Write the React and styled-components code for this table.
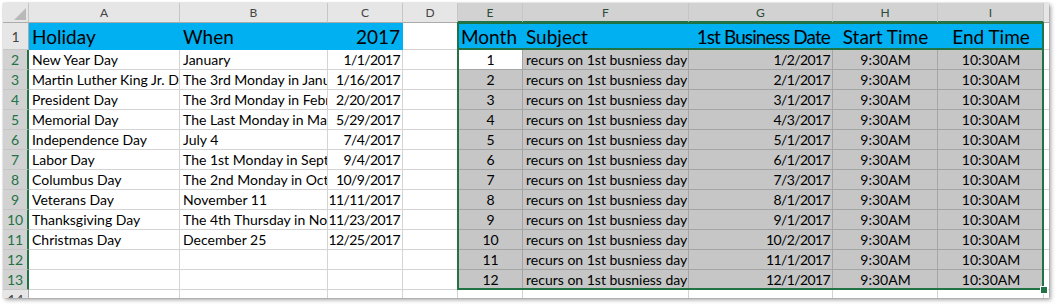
import React from 'react';
import styled, { createGlobalStyle, css } from 'styled-components';

const GlobalStyle = createGlobalStyle`
  html, body {
    margin: 0;
    padding: 0;
    background: #ffffff;
  }
  body {
    font-family: Lato, "Liberation Sans", sans-serif;
  }
`;

const GREEN = '#217346';
const BLUE = '#00b0f0';
const GRID = '#d4d4d4';
const SEL_FILL = '#c6c6c6';
const SEL_GRID = '#a5a5a5';

const columns = [
  { key: 'A', width: 151 },
  { key: 'B', width: 148 },
  { key: 'C', width: 75 },
  { key: 'D', width: 55 },
  { key: 'E', width: 65, selected: true },
  { key: 'F', width: 166, selected: true },
  { key: 'G', width: 144, selected: true },
  { key: 'H', width: 105, selected: true },
  { key: 'I', width: 106, selected: true },
  { key: 'J', width: 6 },
];

const holidays = [
  ['New Year Day', 'January', '1/1/2017'],
  ['Martin Luther King Jr. Day', 'The 3rd Monday in January', '1/16/2017'],
  ['President Day', 'The 3rd Monday in February', '2/20/2017'],
  ['Memorial Day', 'The Last Monday in May', '5/29/2017'],
  ['Independence Day', 'July 4', '7/4/2017'],
  ['Labor Day', 'The 1st Monday in September', '9/4/2017'],
  ['Columbus Day', 'The 2nd Monday in October', '10/9/2017'],
  ['Veterans Day', 'November 11', '11/11/2017'],
  ['Thanksgiving Day', 'The 4th Thursday in November', '11/23/2017'],
  ['Christmas Day', 'December 25', '12/25/2017'],
];

const firstDays = [
  '1/2/2017', '2/1/2017', '3/1/2017', '4/3/2017', '5/1/2017', '6/1/2017',
  '7/3/2017', '8/1/2017', '9/1/2017', '10/2/2017', '11/1/2017', '12/1/2017',
];

const headerRow = [
  { text: 'Holiday', align: 'left' },
  { text: 'When', align: 'left' },
  { text: '2017', align: 'right' },
  null,
  { text: 'Month', align: 'left' },
  { text: 'Subject', align: 'left' },
  { text: '1st Business Date', align: 'right', tight: true },
  { text: 'Start Time', align: 'center' },
  { text: 'End Time', align: 'center' },
  null,
];

const buildRow = (i) => {
  const h = holidays[i] || [];
  const month = i + 1;
  return [
    { text: h[0], align: 'left' },
    { text: h[1], align: 'left' },
    { text: h[2], align: 'right', num: true },
    {},
    { text: String(month), align: 'center', sel: i > 0, active: i === 0 },
    { text: 'recurs on 1st busniess day', align: 'left', sel: true },
    { text: firstDays[i], align: 'right', sel: true, num: true },
    { text: '9:30AM', align: 'center', sel: true },
    { text: '10:30AM', align: 'center', sel: true },
    {},
  ];
};

const App = () => {
  const rows = Array.from({ length: 12 }, (_, i) => buildRow(i));

  return (
    <Page>
      <GlobalStyle />
      <Sheet>
        <Grid>
          <Corner>
            <svg width="12" height="12" viewBox="0 0 12 12">
              <polygon points="12,0 12,12 0,12" fill="#b9b9b9" />
            </svg>
          </Corner>
          {columns.map((c) => (
            <ColHead key={c.key} $selected={c.selected}>
              {c.key === 'J' ? '' : c.key}
            </ColHead>
          ))}

          <RowHead>1</RowHead>
          {headerRow.map((cell, i) =>
            cell ? (
              <TitleCell key={i} $align={cell.align} $tight={cell.tight}>
                {cell.text}
              </TitleCell>
            ) : (
              <Cell key={i} />
            )
          )}

          {rows.map((row, r) => (
            <React.Fragment key={r}>
              <RowHead $selected>{r + 2}</RowHead>
              {row.map((cell, i) => (
                <Cell
                  key={i}
                  $align={cell.align}
                  $sel={cell.sel}
                  $active={cell.active}
                  $num={cell.num}
                >
                  {cell.text}
                </Cell>
              ))}
            </React.Fragment>
          ))}

          <RowHead>14</RowHead>
          {columns.map((c) => (
            <Cell key={c.key} />
          ))}
        </Grid>

        <Selection />
        <SelectionSplit />
        <FillHandle />
      </Sheet>
    </Page>
  );
};

export default App;

const Page = styled.div`
  width: 1056px;
  height: 305px;
  padding: 3px 0 0 3px;
  box-sizing: border-box;
  overflow: hidden;
`;

const Sheet = styled.div`
  position: relative;
  width: 1046px;
  height: 295px;
  overflow: hidden;
  background: #ffffff;
  box-shadow: 2px 2px 4px rgba(0, 0, 0, 0.35), 0 0 1px rgba(0, 0, 0, 0.35);
`;

const Grid = styled.div`
  display: grid;
  grid-template-columns: 26px ${columns.map((c) => `${c.width}px`).join(' ')};
  grid-template-rows: 20px 27px repeat(12, 20px) 20px;
`;

const headStyles = css`
  box-sizing: border-box;
  display: flex;
  align-items: center;
  justify-content: center;
  font-family: Lato, "Liberation Sans", sans-serif;
  color: #444444;
  background: #e6e6e6;
  border-right: 1px solid #c6c6c6;
  border-bottom: 1px solid #ababab;
  overflow: hidden;
`;

const Corner = styled.div`
  ${headStyles}
  align-items: flex-end;
  justify-content: flex-end;
  padding: 0 2px 2px 0;
`;

const ColHead = styled.div`
  ${headStyles}
  font-size: 12px;
  ${({ $selected }) =>
    $selected &&
    css`
      background: #d2d2d2;
      color: #2b4a38;
      border-bottom: 2px solid ${GREEN};
    `}
`;

const RowHead = styled.div`
  ${headStyles}
  font-size: 14px;
  border-bottom: 1px solid #c6c6c6;
  border-right: 1px solid #ababab;
  ${({ $selected }) =>
    $selected &&
    css`
      background: #d2d2d2;
      color: ${GREEN};
      border-right: 2px solid ${GREEN};
    `}
`;

const justifyMap = {
  left: 'flex-start',
  center: 'center',
  right: 'flex-end',
};

const Cell = styled.div`
  box-sizing: border-box;
  display: flex;
  align-items: flex-end;
  justify-content: ${({ $align }) => justifyMap[$align] || 'flex-start'};
  padding: 0 2px 0 3px;
  overflow: hidden;
  white-space: nowrap;
  font-size: 14px;
  line-height: 18px;
  letter-spacing: ${({ $num }) => ($num ? '-0.6px' : 'normal')};
  color: #000000;
  background: ${({ $sel }) => ($sel ? SEL_FILL : '#ffffff')};
  border-right: 1px solid ${({ $sel }) => ($sel ? SEL_GRID : GRID)};
  border-bottom: 1px solid ${({ $sel }) => ($sel ? SEL_GRID : GRID)};
  ${({ $active }) =>
    $active &&
    css`
      border-right-color: ${SEL_GRID};
      border-bottom-color: ${SEL_GRID};
    `}
`;

const TitleCell = styled(Cell)`
  font-size: 19px;
  line-height: 23px;
  letter-spacing: ${({ $tight }) => ($tight ? '-0.9px' : 'normal')};
  background: ${BLUE};
  border-right-color: ${BLUE};
  border-bottom-color: ${BLUE};
  padding-bottom: 1px;
`;

const Selection = styled.div`
  position: absolute;
  left: 454px;
  top: 19px;
  width: 587px;
  height: 268px;
  border: 2px solid ${GREEN};
  box-sizing: border-box;
  pointer-events: none;
`;

const SelectionSplit = styled.div`
  position: absolute;
  left: 454px;
  top: 45px;
  width: 587px;
  height: 2px;
  background: ${GREEN};
`;

const FillHandle = styled.div`
  position: absolute;
  left: 1037px;
  top: 283px;
  width: 6px;
  height: 6px;
  background: ${GREEN};
  border: 1px solid #ffffff;
`;
